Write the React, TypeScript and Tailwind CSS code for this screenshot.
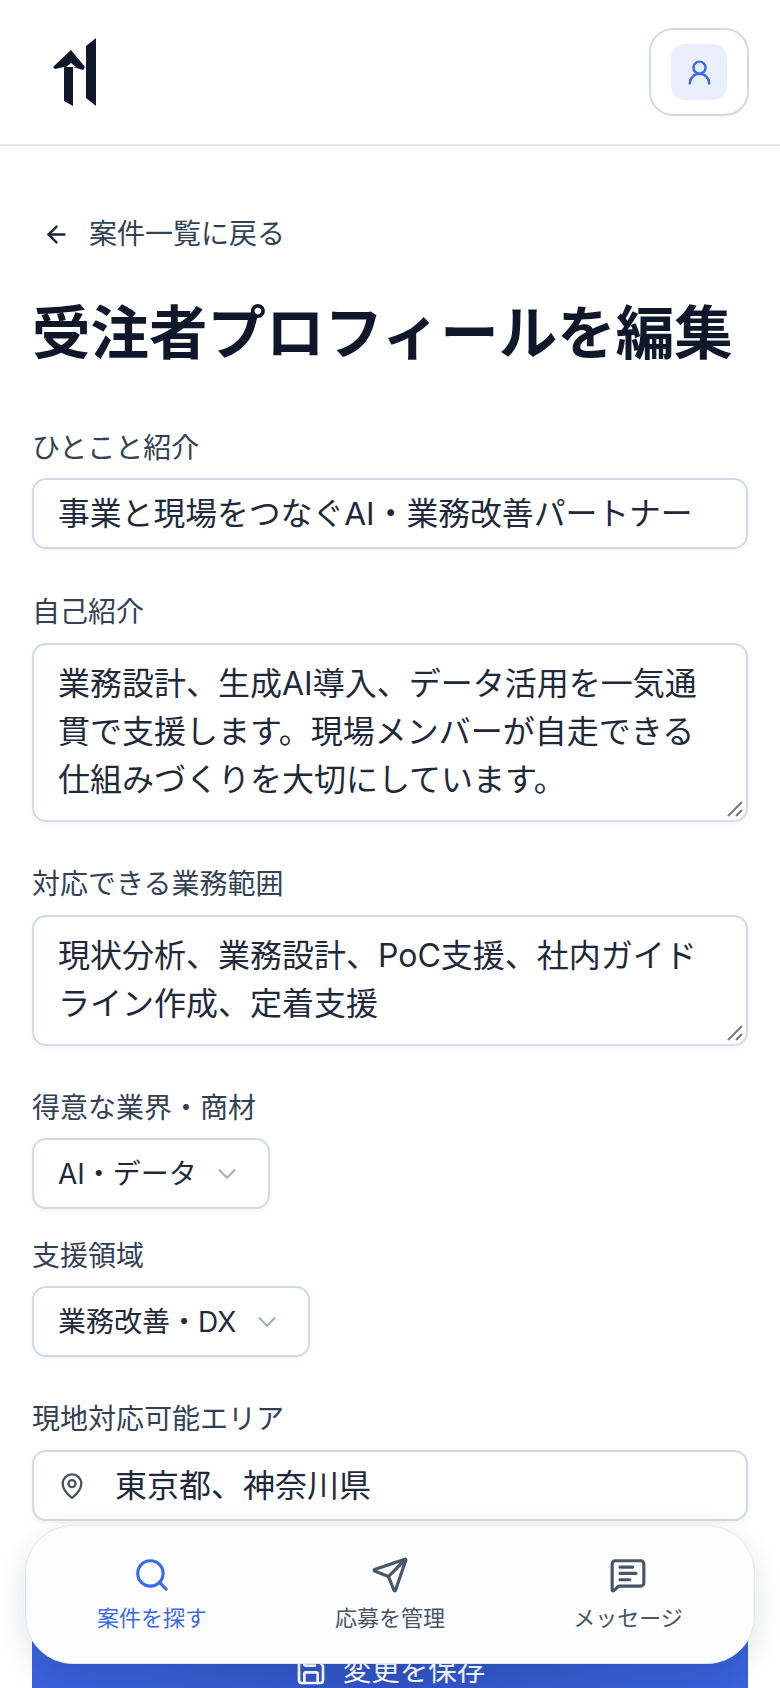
import { ArrowLeft, ChevronDown, MapPin, MessageSquareText, Save, Search, Send, UserRound } from "lucide-react";
import type { ReactNode } from "react";

const font = "[font-family:Inter,'Noto_Sans_CJK_JP',sans-serif]";

function Label({ children, className = "" }: { children: ReactNode; className?: string }) {
  return <div className={`text-[28px] leading-[34px] text-[#334155] ${className}`}>{children}</div>;
}

function Grip() {
  return (
    <svg className="absolute bottom-[2px] right-[2px]" width="18" height="18" viewBox="0 0 18 18">
      <path d="M2 16 16 2M10 16l6-6" stroke="#777" strokeWidth="2" fill="none" />
    </svg>
  );
}

function Area({ children, height }: { children: ReactNode; height: string }) {
  return (
    <div className={`relative mt-[14px] rounded-[14px] border-2 border-[#d0dbea] bg-white px-[24px] pt-[15px] text-[32px] leading-[48px] text-[#1e293b] shadow-[0_2px_4px_rgba(15,23,42,0.05)] ${height}`}>
      {children}
      <Grip />
    </div>
  );
}

function Select({ children, width, gap }: { children: ReactNode; width: string; gap: string }) {
  return (
    <div className={`flex h-[71px] items-center justify-between rounded-[14px] border-2 border-[#d0dbea] bg-white pl-[24px] pr-[26px] text-[28px] text-[#1e293b] shadow-[0_2px_4px_rgba(15,23,42,0.05)] ${width} ${gap}`}>
      <span>{children}</span>
      <ChevronDown size={30} strokeWidth={1.8} className="text-[#a3b0c2]" />
    </div>
  );
}

function NavItem({ icon, label, active }: { icon: ReactNode; label: string; active?: boolean }) {
  return (
    <div className={`flex w-[238px] flex-col items-center ${active ? "text-[#3b6ae8]" : "text-[#475569]"}`}>
      {icon}
      <span className="mt-[10px] text-[22px] leading-[28px]">{label}</span>
    </div>
  );
}

export default function App() {
  return (
    <div className={`relative h-[1688px] w-[780px] overflow-hidden bg-white ${font}`}>
      <header className="flex h-[146px] items-center justify-between border-b-2 border-[#e2e8f0] pl-[52px] pr-[31px]">
        <svg width="46" height="68" viewBox="51 35 46 68" className="text-[#0f172a]">
          <path fill="currentColor" d="M70 47 52 64l2 2 9-2v34l9 5V64l10 3 2-3-14-17Z" />
          <path fill="#fff" d="M70 60 65 64h10Z" />
          <path fill="currentColor" d="M85 43l10-8v68l-10-8Z" />
        </svg>
        <div className="flex h-[88px] w-[100px] items-center justify-center rounded-[24px] border-2 border-[#d0dbea] bg-white">
          <div className="flex h-[56px] w-[56px] items-center justify-center rounded-[14px] bg-[#e9effc]">
            <UserRound size={29} strokeWidth={2} className="text-[#3b6ae8]" />
          </div>
        </div>
      </header>

      <main className="px-[32px]">
        <div className="mt-[70px] flex h-[36px] items-center text-[#334155]">
          <ArrowLeft size={27} strokeWidth={2.2} className="ml-[11px] text-[#1e293b]" />
          <span className="ml-[19px] text-[28px]">案件一覧に戻る</span>
        </div>
        <h1 className="mt-[45px] text-[58.5px] font-bold leading-[72px] whitespace-nowrap text-[#0f172a]">受注者プロフィールを編集</h1>

        <Label className="mt-[62px]">ひとこと紹介</Label>
        <div className="mt-[13px] flex h-[71px] items-center rounded-[14px] border-2 border-[#d0dbea] bg-white px-[24px] text-[31.8px] whitespace-nowrap text-[#1e293b] shadow-[0_2px_4px_rgba(15,23,42,0.05)]">
          事業と現場をつなぐAI・業務改善パートナー
        </div>

        <Label className="mt-[46px]">自己紹介</Label>
        <Area height="h-[179px]">
          業務設計、生成AI導入、データ活用を一気通貫で支援します。現場メンバーが自走できる仕組みづくりを大切にしています。
        </Area>

        <Label className="mt-[45px]">対応できる業務範囲</Label>
        <Area height="h-[131px]">現状分析、業務設計、PoC支援、社内ガイドライン作成、定着支援</Area>

        <Label className="mt-[45px]">得意な業界・商材</Label>
        <Select width="w-[238px]" gap="mt-[13px]">AI・データ</Select>

        <Label className="mt-[30px]">支援領域</Label>
        <Select width="w-[278px]" gap="mt-[13px]">業務改善・DX</Select>

        <Label className="mt-[45px]">現地対応可能エリア</Label>
        <div className="mt-[14px] flex h-[71px] items-center rounded-[14px] border-2 border-[#d0dbea] bg-white pl-[24px] text-[32px] text-[#1e293b] shadow-[0_2px_4px_rgba(15,23,42,0.05)]">
          <MapPin size={28} strokeWidth={2} className="text-[#475569]" />
          <span className="ml-[29px]">東京都、神奈川県</span>
        </div>

        <div className="mt-[94px] flex h-[112px] items-center justify-center rounded-[14px] bg-linear-to-r from-[#3a62dc] via-[#2f54c4] to-[#3a62dc] text-[28.5px] text-white">
          <Save size={32} strokeWidth={2} />
          <span className="ml-[16px]">変更を保存</span>
        </div>
      </main>

      <nav className="absolute left-[25px] top-[1525px] flex h-[139px] w-[730px] justify-center rounded-[48px] border border-[#e2e8f0] bg-[#fdfdfe] pt-[30px] shadow-[0_10px_30px_rgba(15,23,42,0.12)]">
        <NavItem active label="案件を探す" icon={<Search size={38} strokeWidth={2} />} />
        <NavItem label="応募を管理" icon={<Send size={38} strokeWidth={2} />} />
        <NavItem label="メッセージ" icon={<MessageSquareText size={38} strokeWidth={2} />} />
      </nav>
    </div>
  );
}
